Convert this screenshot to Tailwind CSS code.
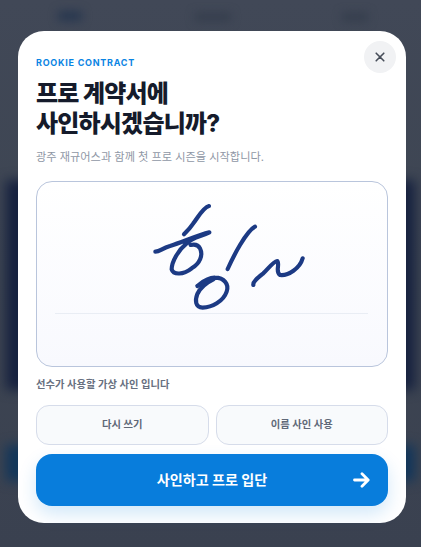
<!DOCTYPE html>
<html lang="ko">
<head>
<meta charset="utf-8">
<script src="https://cdn.jsdelivr.net/npm/@tailwindcss/browser@4"></script>
</head>
<body class="m-0">
<div class="relative w-[421px] h-[547px] overflow-hidden bg-[#3d4452] font-['Inter','Noto_Sans_CJK_KR',sans-serif]">
  <!-- blurred page behind the dialog -->
  <div class="absolute inset-0 bg-gradient-to-b from-[#414857] via-[#3d4552] to-[#3a4150]"></div>
  <div class="absolute left-[58px] top-[11px] w-[24px] h-[10px] bg-[#27374f] blur-[5px]"></div>
  <div class="absolute left-[195px] top-[13px] w-[36px] h-[8px] bg-[#343d4c] blur-[5px]"></div>
  <div class="absolute left-[342px] top-[13px] w-[26px] h-[8px] bg-[#343d4c] blur-[5px]"></div>
  <div class="absolute left-[6px] right-[6px] top-[180px] h-[210px] bg-[#16213f] blur-[6px]"></div>
  <div class="absolute left-[6px] right-[6px] top-[445px] h-[36px] bg-[#12365a] blur-[6px]"></div>

  <!-- dialog -->
  <div class="absolute left-[18px] top-[31px] w-[388px] h-[492px] rounded-[26px] bg-white px-[18px] pt-[26px] pb-[17px] flex flex-col">
    <button class="absolute right-[10px] top-[10px] w-[32px] h-[32px] rounded-full bg-[#f1f2f4] flex items-center justify-center">
      <svg width="12" height="12" viewBox="0 0 12 12" fill="none" stroke="#474d59" stroke-width="1.6" stroke-linecap="round"><path d="M2.2 2.2 9.8 9.8M9.8 2.2 2.2 9.8"/></svg>
    </button>
    <p class="text-[9px] leading-[11px] font-bold tracking-[0.75px] text-[#0a84e3]">ROOKIE CONTRACT</p>
    <h1 class="mt-[11px] text-[24px] leading-[30px] font-extrabold tracking-[-0.8px] text-[#151b2b]">프로 계약서에<br>사인하시겠습니까?</h1>
    <p class="mt-[10px] text-[11.2px] leading-[16px] text-[#8f97a5]">광주 재규어스과 함께 첫 프로 시즌을 시작합니다.</p>

    <div class="relative mt-[16px] h-[186px] rounded-[16px] border border-[#b9c5dc] bg-gradient-to-b from-white to-[#f8f9fe]">
      <div class="absolute left-[18px] right-[19px] top-[131px] h-px bg-[#e9edf4]"></div>
      <svg class="absolute left-[83px] top-[8px]" width="210" height="135" viewBox="0 0 630 405" fill="none" stroke="#1c3a84" stroke-width="12.5" stroke-linecap="round" stroke-linejoin="round">
        <path d="M267 48C250 52 235 80 220 100 210 115 200 125 192 133"/>
        <path d="M106 185C120 185 125 175 150 168 190 155 235 135 268 127 245 140 220 140 200 160 175 180 155 215 155 238 160 255 190 255 215 235 240 220 250 195 240 175 235 165 225 162 212 165"/>
        <path d="M232 288C245 278 262 262 285 263 312 263 328 282 320 305 310 335 275 352 248 353 225 353 225 330 232 312 240 295 255 280 280 268"/>
        <path d="M405 110C390 118 375 140 360 165 345 190 333 215 323 237"/>
        <path d="M400 285C398 275 415 262 430 250 445 235 460 215 472 213 480 225 465 245 480 255 505 258 540 235 548 205"/>
      </svg>
    </div>

    <p class="mt-[10px] text-[10.3px] leading-[14px] font-semibold text-[#687080]">선수가 사용할 가상 사인 입니다</p>

    <div class="mt-[14px] flex gap-[7px]">
      <button class="flex-1 h-[40px] rounded-[13px] border border-[#d6dcea] bg-[#f8fafc] text-[10.3px] font-semibold text-[#5f6878]">다시 쓰기</button>
      <button class="flex-1 h-[40px] rounded-[13px] border border-[#d6dcea] bg-[#f8fafc] text-[10.3px] font-semibold text-[#5f6878]">이름 사인 사용</button>
    </div>

    <button class="relative mt-[9px] h-[52px] rounded-[16px] bg-[#087ddc] text-white text-[14.1px] font-bold shadow-[0_8px_18px_rgba(8,125,220,0.18)] flex items-center justify-center">
      사인하고 프로 입단
      <svg class="absolute right-[18px] top-[18px]" width="17" height="16" viewBox="0 0 17 16" fill="none" stroke="white" stroke-width="2.8" stroke-linecap="round" stroke-linejoin="round"><path d="M1.5 8H15M9 1.8 15.2 8 9 14.2"/></svg>
    </button>
  </div>
</div>
</body>
</html>
